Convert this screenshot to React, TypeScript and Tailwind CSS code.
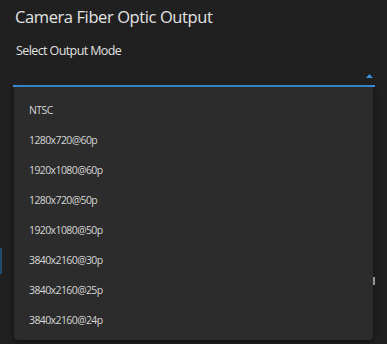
import React from "react";

const items = [
  "NTSC",
  "1280x720@60p",
  "1920x1080@60p",
  "1280x720@50p",
  "1920x1080@50p",
  "3840x2160@30p",
  "3840x2160@25p",
  "3840x2160@24p",
];

export default function App() {
  return (
    <div
      className="relative w-[387px] h-[344px] overflow-hidden bg-[#202020] text-[#e4e4e4]"
      style={{ fontFamily: '"Open Sans", "Noto Sans", sans-serif' }}
    >
      <div className="absolute left-0 top-[248px] w-[2px] h-[26px] bg-[#1f4a70]" />
      <div className="absolute left-[373px] top-[277px] w-[2px] h-[8px] bg-[#bbbbbb]" />
      <div className="pl-[15px] pt-[5px]">
        <div className="text-[16.5px] leading-[24px] tracking-[-0.4px]">Camera Fiber Optic Output</div>
        <div className="mt-[14px] text-[12.5px] leading-[16px] pl-[1px] tracking-[-0.6px] text-[#e0e0e0]">Select Output Mode</div>
      </div>
      <div className="mx-[13px] mt-[5px] relative w-[362px]">
        <div className="h-[21px] flex justify-end items-center pr-[2px]">
          <svg width="7" height="4" viewBox="0 0 7 4" className="mt-[2px]">
            <polygon points="0,4 3.5,0 7,4" fill="#3a8fe0" />
          </svg>
        </div>
        <div className="h-[2px] bg-[#3b8fde]" />
        <div className="ml-[1px] w-[359px] bg-[#2c2c2c] rounded-b-[4px] shadow-[0_2px_6px_rgba(0,0,0,0.5)] pt-[9px] pb-[4px]">
          {items.map((t) => (
            <div key={t} className="h-[30px] flex items-center pl-[15px] text-[10.5px] text-[#d6d6d6] tracking-[-0.6px]">
              {t}
            </div>
          ))}
        </div>
      </div>
    </div>
  );
}
